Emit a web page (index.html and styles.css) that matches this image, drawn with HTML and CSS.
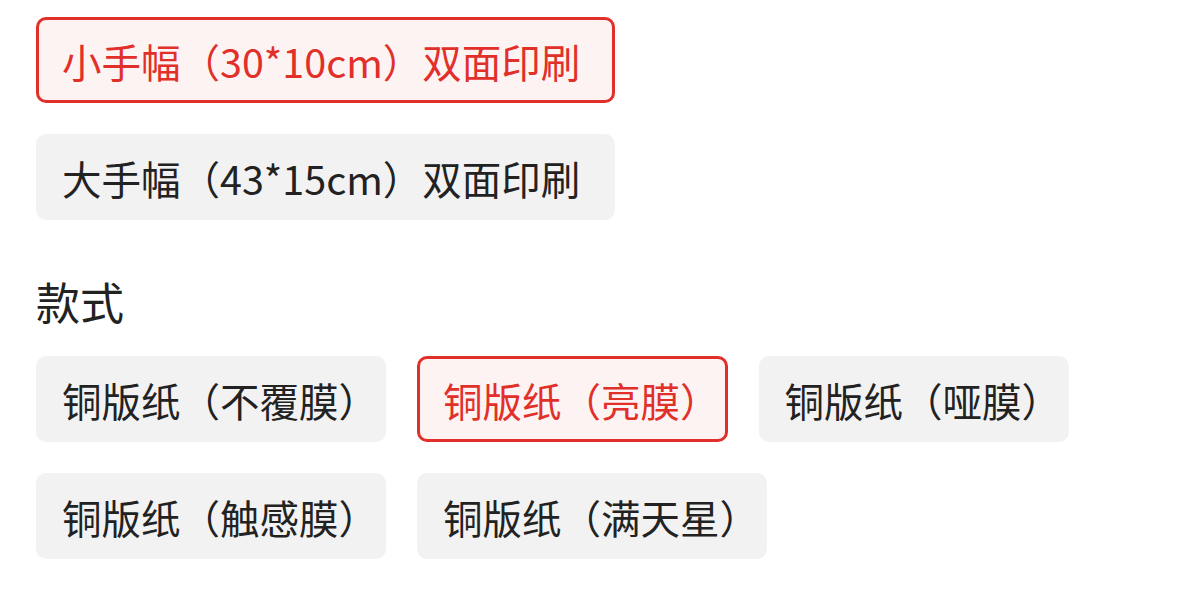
FILE: index.html
```html
<!DOCTYPE html>
<html lang="zh-CN">
<head>
    <meta charset="UTF-8">
    <meta name="viewport" content="width=device-width, initial-scale=1.0">
    <title>规格选择</title>
    <link rel="stylesheet" href="styles.css">
</head>
<body>
    <div class="spec">
        <div class="options options-size">
            <span class="option active">小手幅（30*10cm）双面印刷</span>
            <span class="option">大手幅（43*15cm）双面印刷</span>
        </div>

        <div class="spec-title">款式</div>
        <div class="options options-style">
            <span class="option">铜版纸（不覆膜）</span>
            <span class="option active">铜版纸（亮膜）</span>
            <span class="option">铜版纸（哑膜）</span>
            <span class="option">铜版纸（触感膜）</span>
            <span class="option">铜版纸（满天星）</span>
        </div>
    </div>
</body>
</html>
```

FILE: styles.css
```css
body {
    margin: 0;
    background-color: #fff;
    font-family: "Noto Sans CJK SC", "Noto Sans", sans-serif;
    color: #222;
}
.spec {
    padding: 17px 36px;
}
.options {
    display: flex;
    flex-wrap: wrap;
    gap: 31px;
}
.options-size {
    flex-direction: column;
    align-items: flex-start;
}
.option {
    display: inline-flex;
    align-items: center;
    height: 86px;
    box-sizing: border-box;
    padding: 0 23px;
    border: 3px solid transparent;
    border-radius: 10px;
    background-color: #f2f2f2;
    font-size: 39.5px;
    color: #222;
}
.options-size .option {
    padding-right: 32px;
}
/* the closing full-width bracket already leaves space on its right */
.options-style .option {
    padding-right: 5px;
}
.option.active {
    border-color: #e1302a;
    background-color: #fdf3f3;
    color: #e1302a;
}
.spec-title {
    margin: 55px 0 29px;
    font-size: 44px;
    line-height: 52px;
    color: #222;
}
```
